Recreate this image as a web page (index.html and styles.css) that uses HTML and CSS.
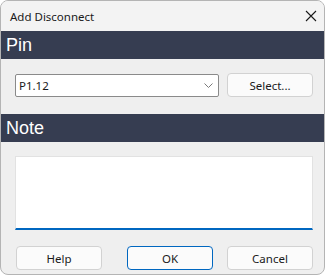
FILE: index.html
```html
<!DOCTYPE html>
<html lang="en">

<head>
    <meta charset="UTF-8" />
    <meta name="viewport" content="width=device-width, initial-scale=1.0" />
    <title>Add Disconnect</title>
    <link rel="stylesheet" href="styles.css">
</head>

<body>
    <div class="window">
        <div class="titlebar">
            <span class="title">Add Disconnect</span>
            <svg class="close" width="12" height="12" viewBox="0 0 12 12">
                <path d="M1 1 L11 11 M11 1 L1 11" stroke="#1a1a1a" stroke-width="1.1" fill="none" />
            </svg>
        </div>

        <div class="band">Pin</div>
        <div class="pin-row">
            <div class="combo">
                <span>P1.12</span>
                <svg width="9" height="5" viewBox="0 0 9 5">
                    <path d="M0.5 0.5 L4.5 4.5 L8.5 0.5" stroke="#7a7a7a" stroke-width="1" fill="none" />
                </svg>
            </div>
            <button class="btn">Select...</button>
        </div>

        <div class="band">Note</div>
        <div class="note"></div>

        <div class="actions">
            <button class="btn help">Help</button>
            <button class="btn ok">OK</button>
            <button class="btn cancel">Cancel</button>
        </div>
    </div>
</body>

</html>
```

FILE: styles.css
```css
* {
    box-sizing: border-box;
}

body {
    margin: 0;
    font-family: "Noto Sans", "Open Sans", sans-serif;
    font-size: 11.5px;
    color: #1a1a1a;
}

.window {
    width: 325px;
    height: 275px;
    border: 1px solid #b4b4b4;
    border-radius: 8px;
    background-color: #efefef;
    overflow: hidden;
}

.titlebar {
    height: 30px;
    background-color: #f3f3f3;
    display: flex;
    align-items: center;
    justify-content: space-between;
    padding: 0 6px 0 9px;
}

.close {
    margin-right: 1px;
}

.band {
    height: 28px;
    background-color: #363d51;
    color: white;
    font-family: "Liberation Sans", Arial, sans-serif;
    font-size: 18px;
    line-height: 28px;
    padding-left: 5px;
}

.pin-row {
    display: flex;
    gap: 8px;
    padding: 14px 0 17px 14px;
    align-items: flex-start;
}

.combo {
    width: 204px;
    height: 23px;
    background-color: white;
    border: 1px solid #8a8a8a;
    border-radius: 2px;
    display: flex;
    align-items: center;
    justify-content: space-between;
    padding: 0 5px 0 3px;
    margin-top: 1px;
}

.btn {
    width: 86px;
    height: 24px;
    background-color: #fbfbfb;
    border: 1px solid #d2d2d2;
    border-radius: 4px;
    font-family: "Noto Sans", "Open Sans", sans-serif;
    font-size: 11.5px;
    color: #1a1a1a;
    padding: 0;
}

.note {
    margin: 14px 11px 16px 14px;
    height: 74px;
    background-color: white;
    border: 1px solid #e2e2e2;
    border-bottom: 2px solid #0067c0;
}

.actions {
    display: flex;
    padding-left: 15px;
}

.ok {
    margin-left: 25px;
    border-color: #0067c0;
}

.cancel {
    margin-left: 14px;
}
```
